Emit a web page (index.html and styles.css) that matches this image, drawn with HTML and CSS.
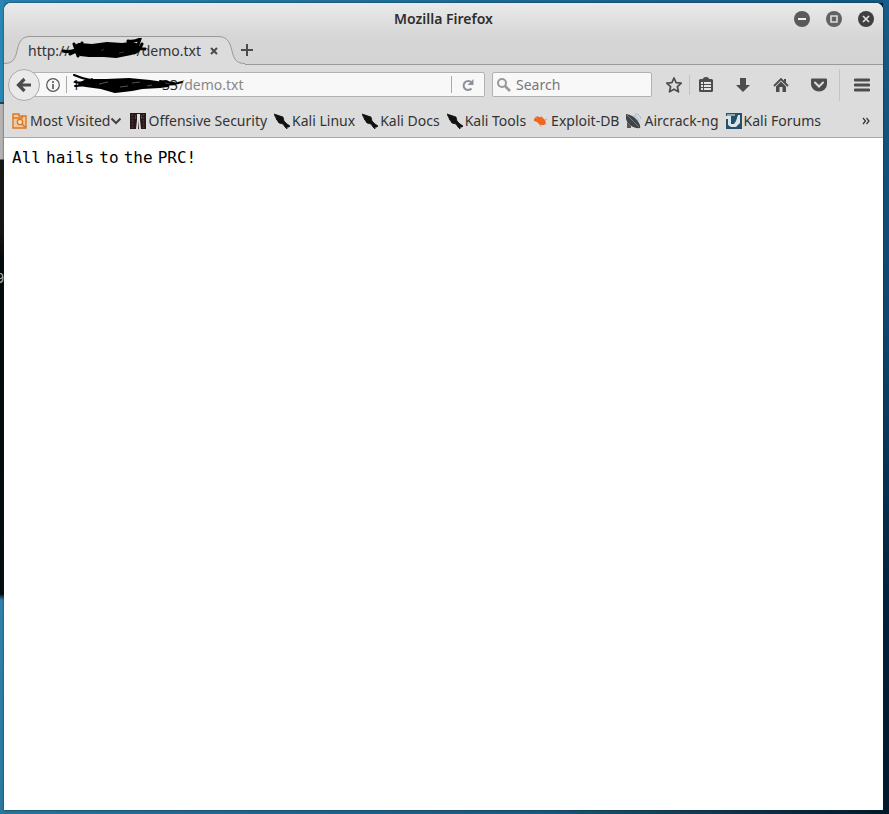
FILE: index.html
```html
<!DOCTYPE html>
<html lang="en">
<head>
<meta charset="utf-8">
<title>Mozilla Firefox</title>
<link rel="stylesheet" href="styles.css">
</head>
<body>
<span class="terminal" aria-hidden="true">9</span>
<div class="window">
  <header class="chrome-top">
    <div class="titlebar">
      <h1>Mozilla Firefox</h1>
      <div class="controls">
        <button aria-label="Minimize"><svg viewBox="0 0 16 16"><circle cx="8" cy="8" r="8" fill="#5a5a5a"/><path d="M4 8h8" stroke="#eee" stroke-width="2"/></svg></button>
        <button aria-label="Maximize"><svg viewBox="0 0 16 16"><circle cx="8" cy="8" r="8" fill="#626262"/><path d="M5 5h6v6H5z" fill="none" stroke="#ddd" stroke-width="1.6"/></svg></button>
        <button aria-label="Close"><svg viewBox="0 0 16 16"><circle cx="8" cy="8" r="8" fill="#404040"/><path d="M5 5l6 6M11 5l-6 6" stroke="#e4e4e4" stroke-width="1.6"/></svg></button>
      </div>
    </div>
    <div class="tabs">
      <div class="tab">
        <svg class="tab-shape" viewBox="0 0 241 29"><path d="M0 28C8 28 11 24 13 15C15 5 18 1 26 1H214C223 1 226 6 228 15C230 24 233 28 241 28V29H0z" fill="#dcdcdc"/><path d="M0 27.5C8 27.500 11 24 13 15C15 5 18 .5 26 .5H214C223 .5 226 6 228 15C230 24 233 27.500 241 27.500" fill="none" stroke="#999"/></svg>
        <span class="tab-label">http://</span><span class="tab-host"></span><span class="tab-label">/demo.txt</span>
        <svg class="scribble tab-scribble" viewBox="0 0 84 24"><path d="M13 8L17 6 30 7 45 5 60 6 68 5 72 8 77 9 76 13 69 16 54 19 42 18 27 18 18 17 13 14z" fill="#000" stroke="#000" stroke-width="2" stroke-linejoin="round"/><path d="M1 13q9 2 18-4M8 16q9-3 12-11M12 6l4 12M66 3q7 1 12-2l-2 6-10-2M72 15q5-1 8-9M74 10l9 1" fill="none" stroke="#000" stroke-width="3" stroke-linecap="round"/><path d="M39 13l3-2M57 15l5-1" stroke="#555" stroke-width=".6"/></svg>
        <button class="tab-close" aria-label="Close tab"><svg viewBox="0 0 8 8"><path d="M1 1l6 6M7 1L1 7" stroke="#4a4a4a" stroke-width="2"/></svg></button>
      </div>
      <button class="new-tab" aria-label="New tab"><svg viewBox="0 0 12 12"><path d="M6 0v12M0 6h12" stroke="#4c4c4c" stroke-width="2"/></svg></button>
    </div>
  </header>
  <nav class="navbar">
    <button class="back" aria-label="Back"><svg viewBox="0 0 16 16"><path d="M8.500 2L2.500 8l6 6M3 8h12" fill="none" stroke="#4c4c4c" stroke-width="3.200"/></svg></button>
    <div class="urlbar">
      <label for="url" aria-label="Address"><svg class="info" viewBox="0 0 14 14"><circle cx="7" cy="7" r="6.300" fill="none" stroke="#555" stroke-width="1.200"/><path d="M7 6v5M7 3v2" stroke="#555" stroke-width="1.600"/></svg></label>
      <span class="url-rule"></span>
      <span class="host">1</span>
      <span class="host-end">33</span>
      <input id="url" type="text" value="/demo.txt">
      <svg class="scribble url-scribble" viewBox="0 0 112 20"><path d="M14 6L34 6 57 5 78 7 92 9 96 12 88 13 70 14 60 16 43 18 29 14 14 12 7 10z" fill="#000" stroke="#000" stroke-width="2" stroke-linejoin="round"/><path d="M2 1q14 6 30 6M3 8q9 2 17-3M3 12l14-1M90 10q8 2 20-2M88 7l14 2" fill="none" stroke="#000" stroke-width="2" stroke-linecap="round"/><path d="M27 10l9-2M48 13l8-1M60 9l8-1M75 12l5-1" stroke="#777" stroke-width=".7"/></svg>
      <span class="reload-rule"></span>
      <button class="reload" aria-label="Reload"><svg viewBox="0 0 12 12"><path d="M9.500 3.500A4.500 4.500 0 1 0 9.500 9.500" fill="none" stroke="#8d9399" stroke-width="2"/><path d="M11.500 0v6h-6z" fill="#8d9399"/></svg></button>
    </div>
    <div class="search">
      <label for="q" aria-label="Search"><svg viewBox="0 0 14 14"><circle cx="5" cy="5" r="4" fill="none" stroke="#999" stroke-width="2"/><path d="M8 8l5 5" stroke="#999" stroke-width="2.600"/></svg></label>
      <input id="q" type="text" placeholder="Search">
    </div>
    <div class="tools">
      <button aria-label="Bookmark this page"><svg viewBox="0 0 16 16"><path d="M8 1l2.100 4.600 5.200.6-3.900 3.500 1.100 5.100L8 12.200l-4.500 2.600 1.100-5.100L.7 6.200l5.200-.6z" fill="none" stroke="#4c4c4c" stroke-width="1.700" stroke-linejoin="round"/></svg></button>
      <button class="list" aria-label="Show bookmarks"><svg viewBox="0 0 16 16"><rect x="1" y="2" width="14" height="13" rx="1.500" fill="#4c4c4c"/><path d="M5 2a3 2 0 0 1 6 0z" fill="#4c4c4c"/><path d="M3 6h2M6 6h7M3 9h2M6 9h7M3 12h2M6 12h7" stroke="#e4e4e4" stroke-width="1.800"/></svg></button>
      <button aria-label="Downloads"><svg viewBox="0 0 16 16"><path d="M5 1h6v7h4l-7 7-7-7h4z" fill="#4c4c4c"/></svg></button>
      <button aria-label="Home"><svg viewBox="0 0 16 16"><path d="M1 9l7-7 7 7" fill="none" stroke="#4c4c4c" stroke-width="1.800"/><path d="M11 2h2v4l-2-2zM3 9.500l5-5 5 5V15H9.500v-5h-3v5H3z" fill="#4c4c4c"/></svg></button>
      <button aria-label="Pocket"><svg viewBox="0 0 16 16"><path d="M1 1.500h14q1 0 1 1V7a8 7.500 0 0 1-16 0V2.500q0-1 1-1z" fill="#4c4c4c"/><path d="M4 5.500l4 4 4-4" fill="none" stroke="#ddd" stroke-width="2" stroke-linecap="round"/></svg></button>
      <button class="menu" aria-label="Menu"><svg viewBox="0 0 16 16"><path d="M1 3h14M1 8h14M1 13h14" stroke="#4c4c4c" stroke-width="2.800" stroke-linecap="round"/></svg></button>
    </div>
  </nav>
  <nav class="bookmarks" aria-label="Bookmarks">
    <a class="first" href="#"><svg viewBox="0 0 16 16"><path d="M1 1h6v2h7v12H1z" fill="#f5c99e" stroke="#d77823" stroke-width="1.400"/><path d="M1 5h9l1-2" fill="none" stroke="#d77823" stroke-width="1.400"/><circle cx="8" cy="9" r="2.700" fill="#f8dfc5" stroke="#d77823" stroke-width="1.300"/><path d="M10 11l3 3" stroke="#d77823" stroke-width="1.500"/></svg>Most Visited<svg class="chevron" viewBox="0 0 10 8"><path d="M.5 1.500L5 6l4.500-4.500" fill="none" stroke="#444" stroke-width="2"/></svg></a>
    <a href="#"><svg viewBox="0 0 16 16"><path d="M0 0h16v16H0z" fill="#21191b"/><path d="M2.500 1v14M13.500 1v14" stroke="#59292c" stroke-width="1.500" stroke-dasharray="2 1"/><path d="M7 1h3v6l1 9H9V7L8 16H6l1-9z" fill="#e8dcda"/><path d="M5.500 2v4M11.500 2v4" stroke="#8b2d2d"/></svg>Offensive Security</a>
    <a href="#"><svg viewBox="0 0 16 16"><path d="M0 1L3 2l3 1 3 1 1 4 3 3 3 2-1 1-2 0 0 2-2-2-2-3-4-1-2-3z" fill="#111" stroke="#111" stroke-width=".8" stroke-linejoin="round"/><path d="M2 6l5 1" stroke="#111"/></svg>Kali Linux</a>
    <a href="#"><svg viewBox="0 0 16 16"><path d="M0 1L3 2l3 1 3 1 1 4 3 3 3 2-1 1-2 0 0 2-2-2-2-3-4-1-2-3z" fill="#111" stroke="#111" stroke-width=".8" stroke-linejoin="round"/><path d="M2 6l5 1" stroke="#111"/></svg>Kali Docs</a>
    <a href="#"><svg viewBox="0 0 16 16"><path d="M0 1L3 2l3 1 3 1 1 4 3 3 3 2-1 1-2 0 0 2-2-2-2-3-4-1-2-3z" fill="#111" stroke="#111" stroke-width=".8" stroke-linejoin="round"/><path d="M2 6l5 1" stroke="#111"/></svg>Kali Tools</a>
    <a href="#"><svg viewBox="0 0 16 16"><path d="M1 6l3-3 2 1 3 0 3 3 1 3-2 2-4 0-3-3-3-1z" fill="#ec681f"/><path d="M8 3l1 2M7 11l1 3M12 7l2-1M12 11l1 1M2 4l2 1" stroke="#f1945f"/></svg>Exploit-DB</a>
    <a href="#"><svg viewBox="0 0 16 16"><path d="M0 1q7 1 11 6 4 5 3 8-7 1-12-5Q-1 6 0 1z" fill="#3d4548"/><path d="M1 9l4 4v2H1z" fill="#555"/><path d="M1 2l12 12" stroke="#747b7d"/><path d="M7 3q4-1 6 5M9 1q5 0 6 5" fill="none" stroke="#a9b8d2"/></svg>Aircrack-ng</a>
    <a href="#"><svg viewBox="0 0 16 16"><path d="M0 0h16v16H0z" fill="#25506b"/><path d="M0 3h5v8h3l2-3 2-6h2v8l-4 4H5L2 12V6H0z" fill="#dbe4e9"/><path d="M1 1h8v2H1z" fill="#8fa8b5"/></svg>Kali Forums</a>
    <button class="more" aria-label="More bookmarks"><svg viewBox="0 0 8 8"><path d="M1 1l2.500 3L1 7M4.500 1L7 4 4.500 7" fill="none" stroke="#333" stroke-width="1.200"/></svg></button>
  </nav>
  <main><p>All<span> </span>hails<span> </span>to<span> </span>the<span> </span>PRC!</p></main>
</div>
</body>
</html>
```
FILE: styles.css
```css
* { box-sizing: border-box; }
body {
  margin: 0;
  min-height: 100vh;
  padding: 3px 6px 4px 4px;
  display: flex;
  overflow: hidden;
  font: 14px/20px "Noto Sans", sans-serif;
  color: #333;
  background:
    linear-gradient(#2b86b4 0 102px, #17465d 102px 104px, #b5b3b2 104px 159px, #181818 160px, #1a1414 230px, #03090c 260px, #050b0d 594px, #2f81a9 600px, #2878a0) left / 4px 100% no-repeat,
    linear-gradient(#145d8c, #0b4770 40%, #012039 75%, #011a2c) right / 6px 100% no-repeat,
    linear-gradient(90deg, #2a7fac, #15587f) top / 100% 3px no-repeat,
    linear-gradient(90deg, #2a7198, #1c587b 60%, #01192b) #1c587b;
}
.terminal {
  position: absolute;
  left: -4px;
  top: 268px;
  font-family: "DejaVu Sans Mono", monospace;
  color: #aaa;
}
button {
  padding: 0;
  border: 0;
  background: none;
  display: flex;
  align-items: center;
  justify-content: center;
}
svg { display: block; width: 16px; height: 16px; flex: none; }
input {
  min-width: 0;
  flex: 1;
  padding: 0;
  border: 0;
  outline: 0;
  background: none;
  font: inherit;
  color: #888;
}
input::placeholder { color: #777; opacity: 1; }
.window {
  position: relative;
  flex: 1;
  min-width: 0;
  display: flex;
  flex-direction: column;
  border-radius: 7px 7px 0 0;
  overflow: hidden;
  background: #fff;
  box-shadow: 0 0 2px #00293f;
}
.chrome-top {
  background: linear-gradient(#eaeaea, #d6d6d6 34px, #d4d4d4);
  border-bottom: 1px solid #999;
}
.titlebar {
  height: 33px;
  padding-bottom: 2px;
  display: grid;
  grid-template-columns: 1fr auto 1fr;
  align-items: center;
}
h1 { grid-column: 2; margin: 0; font-size: 14px; line-height: 20px; font-weight: 600; color: #2e2e2e; }
.controls { display: flex; gap: 16px; justify-content: flex-end; padding-right: 9px; }
.tabs { height: 28px; display: flex; align-items: center; }
.tab {
  position: relative;
  width: 241px;
  height: 29px;
  padding: 2px 27px 0 24px;
  display: flex;
  align-items: center;
}
.tab-shape { position: absolute; left: 0; top: 0; width: 241px; height: 29px; }
.tab-label { position: relative; }
.tab-host { flex: 1; }
.tab-close { position: relative; margin-left: 9px; }
.tab-close svg { width: 8px; height: 8px; }
.scribble { position: absolute; }
.tab-scribble { left: 58px; top: 2px; width: 84px; height: 24px; }
.new-tab svg { width: 12px; height: 12px; }
.new-tab { margin-left: -4px; }
.navbar {
  height: 39px;
  padding: 0 12px 0 4px;
  display: flex;
  align-items: center;
  background: #dcdcdc;
}
.back {
  position: relative;
  z-index: 1;
  width: 32px;
  height: 32px;
  border: 1px solid #aaa;
  border-radius: 50%;
  background: #eaeaea;
}
.urlbar, .search {
  height: 25px;
  display: flex;
  align-items: center;
  border: 1px solid #b2b2b2;
  border-radius: 2px;
  background: #f8f8f8;
}
.urlbar { position: relative; flex: 1; min-width: 0; margin-left: -8px; padding-left: 13px; }
.info { width: 14px; height: 14px; }
.url-rule, .reload-rule { width: 1px; height: 17px; background: #aaa; }
.url-rule { margin: 0 5px 0 6px; }
.host { width: 90px; color: #222; }
.host-end { width: 17px; color: #222; }
.url-scribble { left: 39px; top: 1px; width: 112px; height: 20px; }
.reload { width: 32px; height: 23px; }
.reload svg { width: 12px; height: 12px; }
.search { width: 160px; margin-left: 7px; padding-left: 4px; gap: 5px; }
.search svg { width: 14px; height: 14px; }
.tools { display: flex; align-items: center; margin-left: 3px; }
.tools button { width: 38px; height: 32px; }
.tools .list { width: 31px; }
.tools .list::before { content: ""; width: 1px; height: 20px; margin: 0 8px 0 -14px; background: #c2c2c2; }
.tools .menu { width: 32px; border-left: 1px solid #c4c4c4; margin-left: 1px; padding-left: 12px; }
.bookmarks {
  height: 34px;
  padding: 0 13px 0 8px;
  display: flex;
  align-items: center;
  gap: 7px;
  background: #dcdcdc;
  border-bottom: 1px solid #aaa;
}
.bookmarks a {
  display: flex;
  align-items: center;
  gap: 2px;
  white-space: nowrap;
  color: #333;
  text-decoration: none;
}
.bookmarks .first { margin-right: 2px; gap: 1px; }
.bookmarks .first svg:first-child { margin-right: 1px; }
.bookmarks .chevron { width: 10px; height: 8px; }
.more { margin-left: auto; }
.more svg { width: 8px; height: 8px; }
main { padding: 10px 8px; flex: 1; }
main p { margin: 0; font: 16px/20px "DejaVu Sans Mono", monospace; color: #000; }
main span { font-family: "DejaVu Sans", sans-serif; }
```
